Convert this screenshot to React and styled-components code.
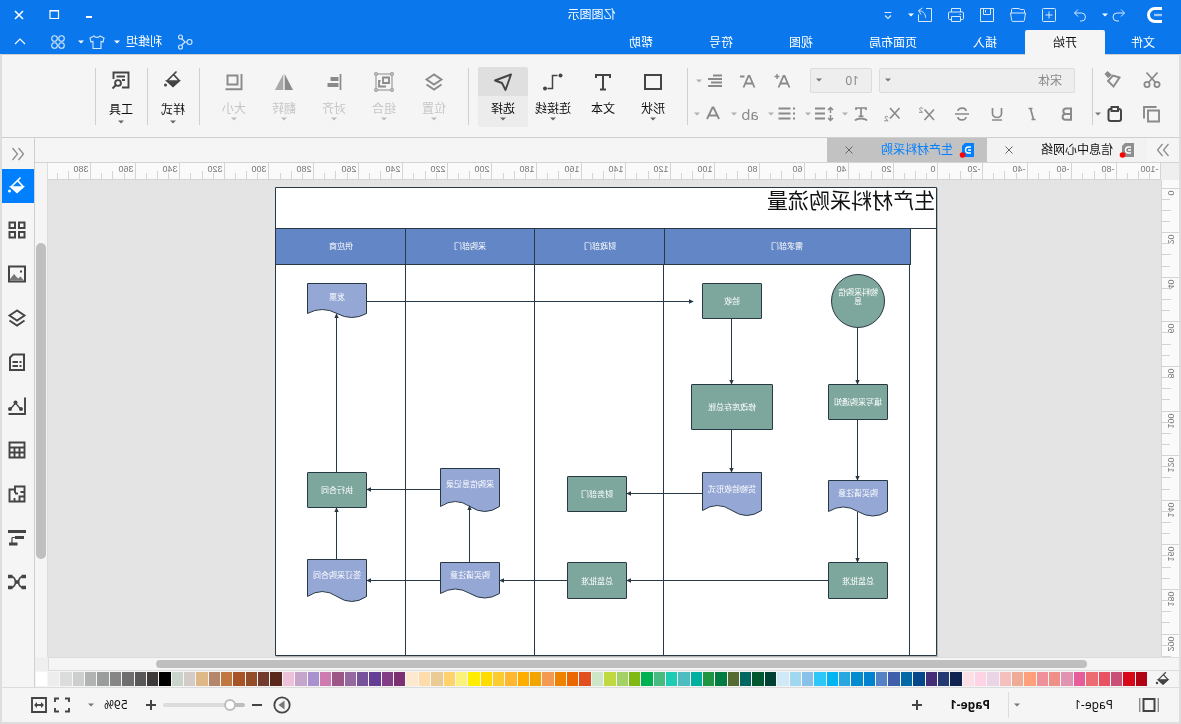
import { useState } from "react";
import styled, { createGlobalStyle, css } from "styled-components";

const FONT = `"Noto Sans", "Noto Sans CJK SC", sans-serif`;

// 文件标签
const MENUS = ["文件", "开始", "插入", "页面布局", "视图", "符号", "帮助"];

// 调色板颜色
const COLORS = (
  "b20315 d9071a c94f76 e85262 eb6d71 e75d9b e194b2 ee9088 f0909b ffa07a " +
  "f0ab96 f5bfbb ead5e6 fed3e4 fde0e6 0e2350 233a72 442d79 04478b 0069a5 " +
  "3f5fab 5482c5 0082cf 008cce 29a7e1 00b5f2 2fc6f9 8ac1ea 9fd8f0 cfeaf6 " +
  "004134 005830 006760 556b2f 007b42 1f9442 00afa0 4fbcbf 1dccb2 48bc80 " +
  "00b152 80b911 a3d165 c0d941 cde6c7 e04f1d eb6700 ef8200 f49951 f2a500 " +
  "ffae00 feb72f fccb32 ffdb00 ffee00 fbf27c ffd26c ebcb94 ffdcaa fde8d0 " +
  "7c2f71 843c84 653d94 75529a 9668a0 9c5687 ce7bb1 a991cf c6a5cb ecc2db " +
  "5a281a 733a2e 934d28 a95426 c07840 b4866b deb887 d4cbc6 c9d4cb 000000 " +
  "3e3a39 595757 6f6f6f 868686 9b9d9c b0b3b2 cdcfce dcdcdc ededed ffffff"
).split(" ");

// 泳道标题
const LANES = [
  { x: 26.5, w: 246, cx: 150, text: "需求部门" },
  { x: 272.5, w: 130, cx: 337, text: "财政部门" },
  { x: 402.5, w: 129, cx: 467, text: "采购部门" },
  { x: 531.5, w: 130, cx: 596, text: "供应商" },
];

// 流程节点
const BOXES = [
  { x: 49.5, y: 197.5, w: 59, h: 35, text: "填写采购通知" },
  { x: 49.5, y: 375.5, w: 59, h: 36, text: "总监批准" },
  { x: 175.5, y: 96.5, w: 59, h: 35, text: "验收" },
  { x: 164.5, y: 197.5, w: 81, h: 45, text: "修改库存总账" },
  { x: 310.5, y: 289.5, w: 59, h: 35, text: "财务部门" },
  { x: 310.5, y: 375.5, w: 59, h: 36, text: "总监批准" },
  { x: 570.5, y: 285.5, w: 59, h: 35, text: "执行合同" },
];

const DOCS = [
  { x: 49.5, y: 293.5, h: 31, a: 9, ty: 306, text: "购买请注意" },
  { x: 175.5, y: 285.5, h: 38, a: 10, ty: 302, text: "货物验收形式" },
  { x: 437.5, y: 281.5, h: 38, a: 10, ty: 297, text: "采购信息记录" },
  { x: 437.5, y: 375.5, h: 31, a: 9, ty: 388, text: "购买请注意" },
  { x: 570.5, y: 372.5, h: 37, a: 10, ty: 388, text: "签订采购合同" },
  { x: 570.5, y: 96.5, h: 30, a: 8, ty: 110, text: "发票" },
];

const LINKS = [
  "M79.5 141V197",
  "M79.5 233V293",
  "M79.5 325V375",
  "M205.5 132V197",
  "M205.5 243V285",
  "M235 306.5H310",
  "M109 393.5H310",
  "M370 393.5H437",
  "M497 393.5H570",
  "M467.5 375V319",
  "M497 302.5H570",
  "M600.5 372V321",
  "M600.5 285V127",
  "M570 114.5H244",
];

// 图标
const Icon = ({ size = 20, w = 1.5, children }) => (
  <Svg
    width={size}
    height={size}
    viewBox="0 0 20 20"
    fill="none"
    stroke="currentColor"
    strokeWidth={w}
    aria-hidden="true"
  >
    {children}
  </Svg>
);

const Caret = () => (
  <Svg width="6" height="4" viewBox="0 0 6 4" aria-hidden="true">
    <path d="M0 0.5H6L3 3.5Z" fill="currentColor" />
  </Svg>
);

const icons = {
  undo: (
    <Icon w={1}>
      <path d="M8 4.5 4.5 8 8 11.5M4.5 8H12a3.7 3.7 0 0 1 0 8H10" />
    </Icon>
  ),
  redo: (
    <Icon w={1}>
      <path d="M12 4.5 15.5 8 12 11.5M15.5 8H8.5a3.7 3.7 0 0 0 0 8H10" />
    </Icon>
  ),
  add: (
    <Icon w={1}>
      <rect x="3.5" y="3.5" width="13" height="13" rx="1" />
      <path d="M10 6.5v7M6.5 10h7" />
    </Icon>
  ),
  open: (
    <Icon w={1}>
      <path d="M3.5 8V5.500a1 1 0 0 1 1-1h3l1.500-1h6.500a1 1 0 0 1 1 1V8M2.500 8h15l-1.200 7.500a1 1 0 0 1-1 .9H4.700a1 1 0 0 1-1-.9Z" />
    </Icon>
  ),
  save: (
    <Icon w={1}>
      <path d="M3.5 3.5h13v13h-13ZM6.5 3.5v6h7v-6M11.5 5v2.5" />
    </Icon>
  ),
  print: (
    <Icon w={1}>
      <path d="M5.5 7V3.5h9V7M5.5 14.5h-2a1 1 0 0 1-1-1V8a1 1 0 0 1 1-1h13a1 1 0 0 1 1 1v5.5a1 1 0 0 1-1 1h-2M5.5 11.5h9v5h-9ZM5 9.5h1.5" />
    </Icon>
  ),
  exportTo: (
    <Icon w={1}>
      <path d="M9 3.5H3.5v13h13V9.5M12.5 3 16.5 5.5 14 9.5M16 5.8c-4 .2-6.5 2.5-6.5 7" />
    </Icon>
  ),
  more: (
    <Icon w={1.2}>
      <path d="M6.5 7.5h7M7 10.5l3 3 3-3" />
    </Icon>
  ),
  share: (
    <Icon w={1.1}>
      <circle cx="5.5" cy="10" r="2.5" />
      <circle cx="14.5" cy="5" r="2" />
      <circle cx="14.5" cy="15" r="2" />
      <path d="M8 10h2l3.5-3.5M10 10l3.5 3.5" />
    </Icon>
  ),
  shirt: (
    <Icon w={1.1}>
      <path d="M7 4 3 6 4 10l2-.5V16.5h8V9.5l2 .5 1-4-4-2c-1 1.8-5 1.8-6 0Z" />
    </Icon>
  ),
  apps: (
    <Icon w={1.1}>
      <circle cx="6.5" cy="6.5" r="2.8" />
      <circle cx="13.5" cy="6.5" r="2.8" />
      <circle cx="6.5" cy="13.5" r="2.8" />
      <circle cx="13.5" cy="13.5" r="2.8" />
    </Icon>
  ),
  chevronUp: (
    <Icon w={1.1}>
      <path d="M5 12 10 7l5 5" />
    </Icon>
  ),
  cut: (
    <Icon w={1.8}>
      <circle cx="5" cy="14.5" r="2.6" />
      <circle cx="15" cy="14.5" r="2.6" />
      <path d="M4.5 2.5 13.5 12.5M15.5 2.5 6.5 12.5" />
    </Icon>
  ),
  brush: (
    <Icon w={1.9}>
      <path d="M4.5 7.5 11 5.500 16 11 10.500 16.500Z" />
      <path d="m12 5 4.500-4 3 3-3.500 4Z" fill="currentColor" stroke="none" />
    </Icon>
  ),
  copy: (
    <Icon w={1.9}>
      <path d="M3 6.500h11v11H3ZM5.500 3h12.500v11.500" />
    </Icon>
  ),
  paste: (
    <Icon w={2}>
      <rect x="3" y="5" width="12.5" height="12" rx="2" />
      <rect x="6" y="3" width="6.5" height="4" fill="#f5f5f5" />
    </Icon>
  ),
  fontUp: (
    <Icon w={1.8}>
      <path d="M3.5 16.5 8.500 5h1l5 11.500M5.500 12.500h7" />
      <path d="M13.500 5.500h5M16 3v5" strokeWidth="1.4" />
    </Icon>
  ),
  fontDown: (
    <Icon w={1.8}>
      <path d="M3.500 16.500 8.500 5h1l5 11.500M5.500 12.500h7M13.500 5.500h4.500" />
    </Icon>
  ),
  fontColor: (
    <Icon w={1.9}>
      <path d="M4 15 9.500 3.500h1L16 15M6 11.500h8" />
    </Icon>
  ),
  align: (
    <Icon w={1.8}>
      <path d="M3 4.500h9M3 8h14M3 11.500h11M3 15h14" />
    </Icon>
  ),
  bold: (
    <Icon w={2}>
      <path d="M6 4.500h5a2.700 2.700 0 0 1 0 5.400H6ZM6 9.900h5.500a2.900 2.900 0 0 1 0 5.800H6Z" />
    </Icon>
  ),
  italic: (
    <Icon w={1.7}>
      <path d="M6.500 4.500h4M9.500 15.500h4M8.500 4.500l3 11" transform="matrix(-1 0 0 1 20 0)" />
    </Icon>
  ),
  underline: (
    <Icon w={1.7}>
      <path d="M5.500 4v5.500a4.500 4 0 0 0 9 0V4M5 16h10" />
    </Icon>
  ),
  strike: (
    <Icon w={1.7}>
      <path d="M14 7c-.5-4-8-3.800-8 0M6 13c.5 4 8 3.800 8 0M3 10h14" />
    </Icon>
  ),
  sup: (
    <Icon w={1.7}>
      <path d="m3 5.500 9.500 10.500M12.500 5.500 3 16" />
      <path d="M14.500 5c.3-2 3.500-1.500 2.800.3L14.500 8.300H18" strokeWidth="1" />
    </Icon>
  ),
  sub: (
    <Icon w={1.7}>
      <path d="m2.500 4 9.500 10.500M12 4 2.500 14.500" />
      <path d="M14 13.500c.3-2 3.500-1.500 2.800.3L14 16.800h3.800" strokeWidth="1" />
    </Icon>
  ),
  textCurve: (
    <Icon w={1.7}>
      <path d="M5 6V4h10v2M10 4v8.500M7.500 12.300h5M4 16.500c2-2.500 10-2.500 12 0" />
    </Icon>
  ),
  spacing: (
    <Icon w={1.8}>
      <path d="M9 4.500h10M9 9.500h10M9 14.500h10" />
      <path d="M3.500 4v5M3.500 11v5M1 6l2.500-2.500L6 6M1 14l2.500 2.500L6 14" strokeWidth="1.5" />
    </Icon>
  ),
  list: (
    <Icon w={1.8}>
      <path d="M6.500 4.500h12M6.500 9.500h12M6.500 14.500h12M2 4.500h2M2 9.500h2M2 14.500h2" />
    </Icon>
  ),
  shape: (
    <Icon w={2}>
      <rect x="2" y="3" width="16" height="14" />
    </Icon>
  ),
  text: (
    <Icon w={2}>
      <path d="M3 6V3h14v3M10 3v14.500M7 17.500h6" />
    </Icon>
  ),
  connector: (
    <Icon w={1.5}>
      <path d="M5.500 3.500h5v13h5" />
      <circle cx="2.500" cy="3.500" r="2" fill="currentColor" stroke="none" />
      <circle cx="18" cy="16.500" r="2" fill="currentColor" stroke="none" />
    </Icon>
  ),
  cursor: (
    <Icon w={1.9}>
      <path d="M2 2.500 18 8.500l-7 2.500-3.500 7Z" strokeLinejoin="round" />
    </Icon>
  ),
  layer: (
    <Icon w={1.9}>
      <path d="m10 2.500 7.500 5L10 12.500 2.500 7.500ZM2.500 12.500l7.500 5 7.500-5" />
    </Icon>
  ),
  group: (
    <Icon w={1}>
      <path d="M2 2h16v16H2Z" />
      <path
        d="M.8.800h2.400v2.400H.8ZM16.800.800h2.400v2.400h-2.400ZM.8 16.800h2.400v2.400H.8ZM16.800 16.800h2.400v2.400h-2.400Z"
        fill="#f5f5f5"
      />
      <path d="M5 5.500h6v5.500H5ZM13.500 9h1.500v5.500H9v-1" strokeWidth="1.800" />
    </Icon>
  ),
  alignObj: (
    <Icon w={1.7}>
      <path d="M3.500 2v16" />
      <path d="M5.500 7h8M5.500 13h11" strokeWidth="4" />
    </Icon>
  ),
  flip: (
    <Icon w={0}>
      <path d="M9.300 2v16H1Z" fill="#8a8a8a" />
      <path d="M10.700 2v16H19Z" fill="#a8a8a8" />
    </Icon>
  ),
  sizeObj: (
    <Icon w={1.9}>
      <path d="M6.500 3.500h10v9h-10ZM2.500 2v15.200h16" />
    </Icon>
  ),
  fill: (
    <Icon w={1.6}>
      <path d="M9.500 4.500 15.500 10.500 10 16 4 10.500ZM6.500 1.500l4 4" />
      <path d="M4 11h12L10 16.500Z" fill="currentColor" />
      <circle cx="17.500" cy="15" r="1.500" fill="currentColor" stroke="none" />
    </Icon>
  ),
  tools: (
    <Icon w={1.9}>
      <path d="M17.500 9V2.500h-15V17.500h6.500M6 6.500h8.500M6 10h3" />
      <circle cx="13" cy="13" r="2.900" />
      <path d="m15 15 3.500 3.500" />
    </Icon>
  ),
  grid: (
    <Icon w={2}>
      <path d="M2.500 2.500h5.500v5.500H2.500ZM12 2.500h5.500v5.500H12ZM2.500 12h5.500v5.500H2.500ZM12 12h5.500v5.500H12Z" />
    </Icon>
  ),
  image: (
    <Icon w={2}>
      <path d="M2 2.500h16v15H2Z" />
      <path d="M3 16.500 6.500 12.500l2.500 2 4-4.500 4 5v1.500Z" fill="#777" stroke="none" />
      <path d="M5 7.500h2" />
    </Icon>
  ),
  note: (
    <Icon w={2}>
      <path d="M3 2.500h11l3 3v12.500H3ZM5.500 10h2M9 10h5.500M5.500 14h2M9 14h5.500" />
    </Icon>
  ),
  chart: (
    <Icon w={1.9}>
      <path d="M2 1.500V18h16.500" />
      <path d="M6 13.500 11.500 7l5.500 6.500" strokeWidth="1.300" />
      <circle cx="6" cy="13" r="2" fill="currentColor" stroke="none" />
      <circle cx="11.500" cy="6.500" r="2" fill="currentColor" stroke="none" />
      <circle cx="17" cy="13" r="2" fill="currentColor" stroke="none" />
    </Icon>
  ),
  table: (
    <Icon w={1.9}>
      <path d="M2.500 2.500h15v15h-15ZM2.500 7.500h15M2.500 12.500h15M7.500 7.500v10M12.500 7.500v10" />
    </Icon>
  ),
  plan: (
    <Icon w={1.9}>
      <path d="M2.500 2.500h9.500V5.500h5.500v12h-15ZM2.500 8h4M2.500 12.500h5v5M12 5.500v3.500M9 9.500h3M12.500 14v3.500" />
    </Icon>
  ),
  gantt: (
    <Icon w={1.2}>
      <path d="M15 9.500v6M12 9.500h3" />
      <path d="M1 3.500h18M3 9.500h9M9.500 16h8.500" strokeWidth="3" />
    </Icon>
  ),
  mind: (
    <Icon w={1.5}>
      <path d="M4 4.500c5 0 3.500 5.500 6 5.500s1-5.500 6-5.500M4 15.500c5 0 3.500-5.500 6-5.500s1 5.500 6 5.500" />
      <path d="M1 4.500h4.500M14.500 4.500H19M1 15.500h4.500M14.500 15.500H19M7.500 10h5" strokeWidth="3.600" />
    </Icon>
  ),
  pages: (
    <Icon w={2}>
      <path d="M4.500 4h11v12h-11Z" />
      <path d="M.7 3v14M19.300 3v14" strokeWidth="1.400" stroke="#8a8a8a" />
    </Icon>
  ),
  plus: (
    <Icon w={2}>
      <path d="M10 5v10M5 10h10" />
    </Icon>
  ),
  minus: (
    <Icon w={2}>
      <path d="M5 10h10" />
    </Icon>
  ),
  play: (
    <Icon w={1.8}>
      <circle cx="10" cy="10" r="7.700" />
      <path d="M7.500 5.500v9l6-4.500Z" fill="#777" stroke="none" />
    </Icon>
  ),
  full: (
    <Icon w={1.9}>
      <path d="M3 7V3.500h4M13 3.500h4V7M17 13v3.500h-4M7 16.500H3V13" />
    </Icon>
  ),
  fit: (
    <Icon w={1.9}>
      <path d="M3 3h14v14H3Z" />
      <path d="M6 10h8" />
      <path d="M8 7v6L5 10ZM12 7v6l3-3Z" fill="currentColor" stroke="none" />
    </Icon>
  ),
  close: (
    <Icon w={1.5}>
      <path d="m6 6 8 8M14 6l-8 8" />
    </Icon>
  ),
  closeTab: (
    <Icon w={1}>
      <path d="m6.500 6.500 7 7M13.500 6.500l-7 7" />
    </Icon>
  ),
  maximize: (
    <Icon w={1.2}>
      <path d="M5.500 5.500h8.500v8h-8.500ZM5.500 6h8.500" />
    </Icon>
  ),
  minimize: (
    <Icon w={2}>
      <path d="M7 12h6" />
    </Icon>
  ),
  doubleRight: (
    <Icon w={1.2}>
      <path d="m4.500 4 5 6-5 6M10.500 4l5 6-5 6" />
    </Icon>
  ),
  doubleLeft: (
    <Icon w={1.2}>
      <path d="m9.500 4-5 6 5 6M15.500 4l-5 6 5 6" />
    </Icon>
  ),
};

const Logo = () => (
  <Svg width="16" height="18" viewBox="0 0 16 18" fill="none" aria-hidden="true">
    <path d="M1 2.500h7a6.500 6.500 0 0 1 0 13H1" stroke="#fff" strokeWidth="3" />
    <path d="M1 9h8" stroke="#9cc9f7" strokeWidth="2.400" />
  </Svg>
);

const FileIcon = ({ color }) => (
  <Svg width="16" height="16" viewBox="0 0 16 16" fill="none" aria-hidden="true">
    <path d="M1 1h9l3 3v11H1Z" fill={color} />
    <path d="M4 5h2.500a3 3 0 0 1 0 6H4M4 8h3" stroke="#fff" strokeWidth="1.300" />
    <circle cx="12.500" cy="13" r="2.800" fill="#f00" />
  </Svg>
);

const TICKS = Array.from({ length: 100 }, (_, i) => i);

// 横向标尺
const TopRuler = () => (
  <RulerSvg aria-hidden="true">
    {TICKS.map((i) => {
      const x = Math.floor((i * 446) / 40) + 0.5;
      const top = i % 4 === 0 ? 0 : i % 2 === 0 ? 8 : 10;
      return (
        <g key={i}>
          <path d={`M${x} ${top}V16`} stroke="#d4d4d4" />
          {i % 4 === 0 && (
            <text x={x + 2} y="9">
              {i * 5 - 100}
            </text>
          )}
        </g>
      );
    })}
  </RulerSvg>
);

// 纵向标尺
const SideRuler = () => (
  <RulerSvg aria-hidden="true">
    {TICKS.slice(0, 44).map((i) => {
      const y = Math.floor((i * 446) / 40) + 8.5;
      return (
        <g key={i}>
          <path d={`M${i % 4 === 0 ? 0 : i % 2 === 0 ? 8 : 9} ${y}H17`} stroke="#d4d4d4" />
          {i % 4 === 0 && (
            <text textAnchor="end" transform={`translate(11 ${y + 2}) rotate(-90)`}>
              {i * 5}
            </text>
          )}
        </g>
      );
    })}
  </RulerSvg>
);

// 文档形状：底边为波浪线
const docPath = ({ x, y, h, a }) =>
  `M${x} ${y}h59v${h}q-14.750 ${-a} -29.500 0t-29.500 0Z`;

const Diagram = () => (
  <DiagramSvg width="662" height="469" viewBox="0 0 662 469" role="img" aria-label="流程图">
    <defs>
      <marker
        id="arrow"
        viewBox="0 0 6 6"
        refX="5"
        refY="3"
        markerWidth="5"
        markerHeight="5"
        orient="auto"
      >
        <path d="M0 0.300 6 3 0 5.700Z" fill="#283845" />
      </marker>
    </defs>
    <g fill="none" stroke="#283845">
      <path d="M.5 .5h661v468H.5ZM0 41.5H662M27.5 77V469M273.5 77V469M402.5 77V469M531.5 77V469" />
      {LANES.map((l) => (
        <rect key={l.text} x={l.x} y="41.5" width={l.w} height="36" fill="#6387c6" />
      ))}
      {BOXES.map((b) => (
        <rect
          key={`${b.x}-${b.y}`}
          x={b.x}
          y={b.y}
          width={b.w}
          height={b.h}
          rx="0.5"
          fill="#7da79d"
        />
      ))}
      <circle cx="79" cy="114" r="26.5" fill="#7da79d" />
      {DOCS.map((d) => (
        <path key={`${d.x}-${d.y}`} d={docPath(d)} fill="#95a7d5" />
      ))}
      {LINKS.map((d) => (
        <path key={d} d={d} markerEnd="url(#arrow)" />
      ))}
    </g>
    <text className="title" x="2" y="21">
      生产材料采购流量
    </text>
    <g className="label">
      {LANES.map((l) => (
        <text key={l.text} x={l.cx} y="62">
          {l.text}
        </text>
      ))}
      {BOXES.map((b) => (
        <text key={`${b.x}-${b.y}`} x={b.x + b.w / 2} y={b.y + b.h / 2 + 3}>
          {b.text}
        </text>
      ))}
      {DOCS.map((d) => (
        <text key={`${d.x}-${d.y}`} x={d.x + 29.5} y={d.ty + 3}>
          {d.text}
        </text>
      ))}
      <text>
        <tspan x="79" y="108">物料采购信</tspan>
        <tspan x="79" y="117">息</tspan>
      </text>
    </g>
  </DiagramSvg>
);

const Tool = ({ icon, label, active, disabled, plain, loose }) => (
  <ToolButton type="button" disabled={disabled} $active={active}>
    <ToolIcon $active={active} $loose={loose}>{icons[icon]}</ToolIcon>
    <ToolLabel $loose={loose}>{label}</ToolLabel>
    {!plain && <Caret />}
  </ToolButton>
);

const SIDE = ["fill", "grid", "image", "layer", "note", "chart", "table", "plan", "gantt", "mind"];

function App() {
  const [menu, setMenu] = useState("开始");
  const [panel, setPanel] = useState("fill");
  const [zoom, setZoom] = useState(13);

  return (
    <>
      <GlobalStyle />
      <Frame>
        <Header>
          {/* 标题栏 */}
          <TitleRow>
            <QuickTools>
              <LogoBox>
                <Logo />
              </LogoBox>
              <QuickButton type="button" aria-label="撤销">{icons.undo}</QuickButton>
              <QuickCaret type="button" aria-label="撤销记录" $space={5}><Caret /></QuickCaret>
              <QuickButton type="button" aria-label="重做">{icons.redo}</QuickButton>
              <QuickButton type="button" aria-label="新建">{icons.add}</QuickButton>
              <QuickButton type="button" aria-label="打开">{icons.open}</QuickButton>
              <QuickButton type="button" aria-label="保存">{icons.save}</QuickButton>
              <QuickButton type="button" aria-label="打印">{icons.print}</QuickButton>
              <QuickButton type="button" aria-label="导出">{icons.exportTo}</QuickButton>
              <QuickCaret type="button" aria-label="导出选项" $space={3}><Caret /></QuickCaret>
              <QuickButton type="button" aria-label="更多">{icons.more}</QuickButton>
            </QuickTools>
            <AppTitle>亿图图示</AppTitle>
            <WindowControls>
              <WindowButton type="button" aria-label="最小化">{icons.minimize}</WindowButton>
              <WindowButton type="button" aria-label="最大化">{icons.maximize}</WindowButton>
              <WindowButton type="button" aria-label="关闭">{icons.close}</WindowButton>
            </WindowControls>
          </TitleRow>

          {/* 菜单栏 */}
          <MenuRow>
            <MenuTabs>
              {MENUS.map((m) => (
                <MenuTab key={m} type="button" $active={m === menu} onClick={() => setMenu(m)}>
                  {m}
                </MenuTab>
              ))}
            </MenuTabs>
            <Account>
              <AccountButton type="button" aria-label="分享" $space={11}>{icons.share}</AccountButton>
              <UserName type="button">利维坦</UserName>
              <SmallCaret type="button" aria-label="账户菜单" $space={4}><Caret /></SmallCaret>
              <AccountButton type="button" aria-label="主题">{icons.shirt}</AccountButton>
              <SmallCaret type="button" aria-label="主题菜单" $space={7}><Caret /></SmallCaret>
              <AccountButton type="button" aria-label="应用" $space={8}>{icons.apps}</AccountButton>
              <WindowButton type="button" aria-label="收起功能区">{icons.chevronUp}</WindowButton>
            </Account>
          </MenuRow>
        </Header>

        <Main>
          {/* 功能区 */}
          <Ribbon>
            <Clipboard>
              <IconButton type="button" aria-label="剪切">{icons.cut}</IconButton>
              <IconButton type="button" aria-label="格式刷">{icons.brush}</IconButton>
              <IconButton type="button" aria-label="复制">{icons.copy}</IconButton>
              <SplitButton>
                <IconButton type="button" aria-label="粘贴" $dark>{icons.paste}</IconButton>
                <SmallCaret type="button" aria-label="粘贴选项" $dark><Caret /></SmallCaret>
              </SplitButton>
            </Clipboard>
            <Divider />
            <FontGroup>
              <FontRow $left={17}>
                <SelectBox $width={196}>
                  <select aria-label="字体" defaultValue="宋体">
                    <option>宋体</option>
                  </select>
                  <Caret />
                </SelectBox>
                <SelectBox $width={62}>
                  <select aria-label="字号" defaultValue="10">
                    <option>10</option>
                  </select>
                  <Caret />
                </SelectBox>
                <FontSizeButtons>
                  <FormatButton type="button" aria-label="增大字号">{icons.fontUp}</FormatButton>
                  <FormatButton type="button" aria-label="减小字号">{icons.fontDown}</FormatButton>
                </FontSizeButtons>
                <SplitButton>
                  <IconButton type="button" aria-label="对齐方式">{icons.align}</IconButton>
                  <SmallCaret type="button" aria-label="对齐选项"><Caret /></SmallCaret>
                </SplitButton>
              </FontRow>
              <FontRow $left={7}>
                <FormatButtons>
                  {["bold", "italic", "underline", "strike", "sup", "sub"].map((k) => (
                    <FormatButton key={k} type="button" aria-label={k}>
                      {icons[k]}
                    </FormatButton>
                  ))}
                </FormatButtons>
                {["textCurve", "spacing", "list", "ab", "fontColor"].map((k) => (
                  <SplitButton key={k}>
                    <IconButton type="button" aria-label={k}>
                      {k === "ab" ? "ab" : icons[k]}
                    </IconButton>
                    <SmallCaret type="button" aria-label={`${k} 选项`}><Caret /></SmallCaret>
                  </SplitButton>
                ))}
              </FontRow>
            </FontGroup>
            <Divider />
            <ToolGroup>
              <Tool icon="shape" label="形状" />
              <Tool icon="text" label="文本" plain />
              <Tool icon="connector" label="连接线" />
              <Tool icon="cursor" label="选择" active />
            </ToolGroup>
            <Divider />
            <ToolGroup>
              <Tool icon="layer" label="位置" disabled />
              <Tool icon="group" label="组合" disabled />
              <Tool icon="alignObj" label="对齐" disabled />
              <Tool icon="flip" label="翻转" disabled />
              <Tool icon="sizeObj" label="大小" disabled />
            </ToolGroup>
            <Divider />
            <ToolGroup $tight>
              <Tool icon="fill" label="样式" loose />
            </ToolGroup>
            <Divider />
            <ToolGroup $tight>
              <Tool icon="tools" label="工具" loose />
            </ToolGroup>
            <Divider />
          </Ribbon>

          <Body>
            <Editor>
              {/* 文档标签 */}
              <DocTabs>
                <Expand type="button" aria-label="展开">{icons.doubleRight}</Expand>
                <DocTab>
                  <FileIcon color="#8f8f8f" />
                  <button type="button">信息中心网络</button>
                  <CloseTab type="button" aria-label="关闭标签">{icons.closeTab}</CloseTab>
                </DocTab>
                <DocTab $active>
                  <FileIcon color="#0080ff" />
                  <button type="button">生产材料采购</button>
                  <CloseTab type="button" aria-label="关闭标签">{icons.closeTab}</CloseTab>
                </DocTab>
              </DocTabs>

              {/* 画布区域 */}
              <Workspace>
                <Corner />
                <RulerTop>
                  <TopRuler />
                </RulerTop>
                <RulerSide>
                  <SideRuler />
                </RulerSide>
                <Canvas>
                  <Page>
                    <Diagram />
                  </Page>
                </Canvas>
                <ScrollY>
                  <Thumb />
                </ScrollY>
                <ScrollX>
                  <Thumb />
                </ScrollX>
                <Corner />
              </Workspace>

              {/* 调色板 */}
              <Palette>
                <PaletteIcon type="button" aria-label="填充颜色">{icons.fill}</PaletteIcon>
                {COLORS.map((c) => (
                  <Swatch key={c} type="button" aria-label={`#${c}`} $color={`#${c}`} />
                ))}
              </Palette>
            </Editor>

            {/* 侧边栏 */}
            <Sidebar>
              <Collapse type="button" aria-label="收起">{icons.doubleLeft}</Collapse>
              {SIDE.map((s) => (
                <SideButton
                  key={s}
                  type="button"
                  aria-label={s}
                  $active={s === panel}
                  onClick={() => setPanel(s)}
                >
                  {icons[s]}
                </SideButton>
              ))}
            </Sidebar>
          </Body>

          {/* 状态栏 */}
          <StatusBar>
            <StatusGroup>
              <PagesButton type="button" aria-label="页面列表">{icons.pages}</PagesButton>
              <PageSelect>
                <select aria-label="页面" defaultValue="Page-1">
                  <option>Page-1</option>
                </select>
                <Caret />
              </PageSelect>
              <StatusDivider />
              <CurrentPage type="button">Page-1</CurrentPage>
              <StatusButton type="button" aria-label="新增页面">{icons.plus}</StatusButton>
            </StatusGroup>
            <StatusGroup>
              <StatusButton type="button" aria-label="播放" $space={5}>{icons.play}</StatusButton>
              <StatusButton type="button" aria-label="缩小" $space={2}>{icons.minus}</StatusButton>
              <ZoomSlider
                type="range"
                aria-label="缩放"
                min="0"
                max="100"
                value={zoom}
                onChange={(e) => setZoom(Number(e.target.value))}
              />
              <StatusButton type="button" aria-label="放大" $space={13}>{icons.plus}</StatusButton>
              <ZoomValue>59%</ZoomValue>
              <SmallCaret type="button" aria-label="缩放选项" $space={15} $dark><Caret /></SmallCaret>
              <StatusButton type="button" aria-label="全屏" $space={3}>{icons.full}</StatusButton>
              <StatusButton type="button" aria-label="适应宽度" $space={27}>{icons.fit}</StatusButton>
            </StatusGroup>
          </StatusBar>
        </Main>
      </Frame>
    </>
  );
}

const GlobalStyle = createGlobalStyle`
  * {
    box-sizing: border-box;
  }

  body {
    margin: 0;
    background: #f5f5f5;
    font-family: ${FONT};
    font-size: 12px;
    line-height: 16px;
    color: #111;
  }

  button {
    padding: 0;
    border: 0;
    background: none;
    font: inherit;
    color: inherit;
    white-space: nowrap;
  }
`;

const center = css`
  display: flex;
  align-items: center;
  justify-content: center;
`;

const Svg = styled.svg`
  display: block;
  flex: none;
`;

// 整个窗口水平镜像
const Frame = styled.div`
  display: flex;
  flex-direction: column;
  min-height: 100vh;
  overflow: hidden;
  transform: scaleX(-1);
`;

const Header = styled.header`
  background: #0a77ec;
  color: #fff;
`;

const TitleRow = styled.div`
  display: flex;
  align-items: center;
  height: 30px;
`;

const QuickTools = styled.div`
  display: flex;
  align-items: center;
  flex: 1;
`;

const LogoBox = styled.div`
  ${center}
  width: 30px;
  margin: 0 5px 0 11px;
`;

const QuickButton = styled.button`
  ${center}
  width: 31px;
  height: 28px;
  color: #d6e8fc;
`;

const SmallCaret = styled.button`
  ${center}
  width: 8px;
  height: 20px;
  margin-right: ${(props) => props.$space || 0}px;
  color: ${(props) => (props.$dark ? "#777" : "inherit")};
`;

const QuickCaret = styled(SmallCaret)`
  margin-left: -5px;
`;

const AppTitle = styled.h1`
  margin: 0;
  font-size: 12px;
  font-weight: 400;
`;

const WindowControls = styled.div`
  display: flex;
  justify-content: flex-end;
  flex: 1;
  padding-right: 2px;
`;

const WindowButton = styled.button`
  ${center}
  width: 35px;
  height: 24px;
`;

const MenuRow = styled.div`
  display: flex;
  justify-content: space-between;
  height: 24px;
`;

const MenuTabs = styled.nav`
  display: flex;
`;

const MenuTab = styled.button`
  height: 25px;
  padding: 0 28px;
  position: relative;
  border-radius: 2px 2px 0 0;
  background: ${(props) => (props.$active ? "#f5f5f5" : "transparent")};
  color: ${(props) => (props.$active ? "#111" : "#fff")};

  &:first-child {
    padding: 0 26px;
  }
`;

const Account = styled.div`
  display: flex;
  align-items: center;
  padding-right: 3px;
`;

const AccountButton = styled.button`
  ${center}
  width: 24px;
  height: 24px;
  margin-right: ${(props) => props.$space || 0}px;
  color: #d6e8fc;
`;

const UserName = styled.button`
  margin-right: 5px;
`;

const Main = styled.main`
  display: flex;
  flex-direction: column;
  flex: 1;
  border: solid #dedede;
  border-width: 0 2px 2px;
`;

const Ribbon = styled.div`
  display: flex;
  height: 84px;
  padding-top: 12px;
  border-top: 1px solid #cfcfcf;
  border-bottom: 1px solid #cfcfcf;
  background: #f5f5f5;
`;

const Divider = styled.span`
  flex: none;
  width: 1px;
  height: 57px;
  margin-top: 1px;
  background: #d0d0d0;
`;

const Clipboard = styled.div`
  display: grid;
  grid-template-columns: 24px 33px;
  column-gap: 14px;
  align-content: start;
  row-gap: 10px;
  padding: 1px 0 0 15px;
`;

const IconButton = styled.button`
  ${center}
  width: 24px;
  height: 24px;
  font-size: 15px;
  color: ${(props) => (props.$dark ? "#444" : "#8a8a8a")};
`;

const SplitButton = styled.div`
  display: flex;
  align-items: center;
  width: 37px;
  color: #b0b0b0;
`;

const FontGroup = styled.div`
  display: flex;
  flex-direction: column;
  gap: 8px;
  width: 404px;
  padding-top: 1px;
`;

const FontRow = styled.div`
  display: flex;
  align-items: center;
  height: 25px;
  padding-left: ${(props) => props.$left}px;
`;

const SelectBox = styled.div`
  position: relative;
  width: ${(props) => props.$width}px;
  margin-right: 7px;
  color: #777;

  select {
    width: 100%;
    height: 25px;
    padding: 0 12px;
    appearance: none;
    border: 1px solid #dcdcdc;
    border-radius: 2px;
    background: #eee;
    font: inherit;
    color: #888;
  }

  svg {
    position: absolute;
    right: 6px;
    top: 10px;
    pointer-events: none;
  }
`;

const FontSizeButtons = styled.div`
  display: flex;
  margin: 0 4px 0 2px;
`;

const FormatButtons = styled.div`
  display: flex;
  margin-right: 2px;
`;

const FormatButton = styled.button`
  ${center}
  width: 35px;
  height: 24px;
  color: #8a8a8a;
`;

const ToolGroup = styled.div`
  display: flex;
  padding: ${(props) => (props.$tight ? "0 0 0 1px" : "0 9px")};
`;

const ToolButton = styled.button`
  display: flex;
  flex-direction: column;
  align-items: center;
  width: 50px;
  height: 60px;
  border-radius: 2px;
  overflow: hidden;
  background: ${(props) => (props.$active ? "#ececec" : "transparent")};
  color: ${(props) => (props.disabled ? "#c6c6c6" : "#111")};

  > svg {
    flex: none;
    color: ${(props) => (props.disabled ? "#bbb" : "#666")};
  }
`;

const ToolIcon = styled.span`
  ${center}
  flex: none;
  width: 100%;
  height: 29px;
  padding-bottom: ${(props) => (props.$loose ? 4 : 0)}px;
  background: ${(props) => (props.$active ? "#dfdfdf" : "transparent")};
  color: #444;

  button:disabled & {
    color: #8a8a8a;
  }
`;

const ToolLabel = styled.span`
  margin: ${(props) => (props.$loose ? "6px 0 2px" : "5px 0 0")};
`;

const Body = styled.div`
  display: flex;
  flex: 1;
`;

const Editor = styled.section`
  display: flex;
  flex-direction: column;
  flex: 1;
  min-width: 0;
`;

const DocTabs = styled.div`
  display: flex;
  height: 25px;
  border-bottom: 1px solid #d4d4d4;
  background: #f5f5f5;
`;

const Expand = styled.button`
  ${center}
  width: 32px;
  color: #888;
`;

const DocTab = styled.div`
  display: flex;
  align-items: center;
  width: 160px;
  padding: 0 12px 0 12px;
  gap: 6px;
  background: ${(props) => (props.$active ? "#c2c2c2" : "#f2f2f2")};
  color: ${(props) => (props.$active ? "#0080ff" : "#111")};
`;

const CloseTab = styled.button`
  ${center}
  width: 20px;
  height: 20px;
  margin-left: auto;
  color: #666;
`;

const Workspace = styled.div`
  display: grid;
  grid-template-columns: 18px 1fr 13px;
  grid-template-rows: 17px 1fr 14px;
  flex: 1;
`;

const Corner = styled.div`
  background: #efefef;
`;

const RulerSvg = styled.svg`
  display: block;
  position: absolute;
  width: 100%;
  height: 100%;
  font-family: "Liberation Sans", sans-serif;
  font-size: 9px;
  fill: #777;
`;

const RulerTop = styled.div`
  position: relative;
  overflow: hidden;
  border-bottom: 1px solid #d4d4d4;
  background: #fafafa;
`;

const RulerSide = styled.div`
  grid-column: 1;
  grid-row: 2;
  position: relative;
  overflow: hidden;
  border-right: 1px solid #d4d4d4;
  background: #fafafa;
`;

const Canvas = styled.div`
  grid-column: 2;
  grid-row: 2;
  position: relative;
  overflow: hidden;
  background: #e4e4e4;
`;

// 画布上的页面
const Page = styled.div`
  position: absolute;
  left: 224px;
  top: 7px;
  background: #fff;
  box-shadow: -1px 1px 0 #b4b4b4;
`;

const DiagramSvg = styled.svg`
  display: block;
  font-family: ${FONT};

  .title {
    font-size: 21px;
    fill: #111;
  }

  .label {
    font-size: 8px;
    fill: #fff;
    text-anchor: middle;
  }
`;

const Thumb = styled.div`
  flex: 1;
  border-radius: 5px;
  background: #bfbfbf;
`;

const ScrollY = styled.div`
  display: flex;
  grid-column: 3;
  grid-row: 1 / 3;
  padding: 80px 1px 98px;
  border-left: 1px solid #dcdcdc;
  background: #f5f5f5;
`;

const ScrollX = styled.div`
  display: flex;
  grid-column: 1 / 3;
  padding: 2px 107px 2px 92px;
  border: solid #dcdcdc;
  border-width: 1px 1px 1px 0;
  background: #f5f5f5;
`;

const Palette = styled.div`
  display: flex;
  gap: 1px;
  height: 16px;
  padding: 1px 1px 1px 0;
  background: #f5f5f5;
`;

const PaletteIcon = styled.button`
  ${center}
  width: 31px;
  color: #444;

  svg {
    width: 16px;
    height: 16px;
  }
`;

const Swatch = styled.button`
  flex: 1;
  min-width: 0;
  background: ${(props) => props.$color};
`;

const Sidebar = styled.aside`
  display: flex;
  flex-direction: column;
  gap: 10px;
  width: 33px;
  border-left: 1px solid #cfcfcf;
  background: #f5f5f5;
`;

const Collapse = styled.button`
  ${center}
  height: 31px;
  margin-bottom: -10px;
  color: #888;
`;

const SideButton = styled.button`
  ${center}
  height: 34px;
  padding-left: 2px;
  background: ${(props) => (props.$active ? "#0080ff" : "transparent")};
  color: ${(props) => (props.$active ? "#fff" : "#444")};
`;

const StatusBar = styled.footer`
  display: flex;
  justify-content: space-between;
  height: 35px;
  border-top: 1px solid #dcdcdc;
  background: #f5f5f5;
`;

const StatusGroup = styled.div`
  display: flex;
  align-items: center;
`;

const StatusButton = styled.button`
  ${center}
  width: 20px;
  height: 20px;
  margin-right: ${(props) => props.$space || 0}px;
  color: #444;
`;

const PagesButton = styled(StatusButton)`
  width: 24px;
  margin: 0 16px 0 18px;
`;

const PageSelect = styled.div`
  position: relative;
  width: 108px;
  color: #777;

  select {
    width: 100%;
    height: 24px;
    padding: 0 8px;
    appearance: none;
    border: 0;
    background: transparent;
    font: inherit;
    color: #111;
  }

  svg {
    position: absolute;
    right: 1px;
    top: 10px;
    pointer-events: none;
  }
`;

const StatusDivider = styled.span`
  width: 1px;
  height: 26px;
  margin: 0 18px 0 4px;
  background: #dcdcdc;
`;

const CurrentPage = styled.button`
  margin-right: 23px;
  font-weight: 700;
`;

const ZoomSlider = styled.input`
  width: 82px;
  height: 14px;
  margin: 0 2px 0 0;
  appearance: none;
  background: transparent;

  &::-webkit-slider-runnable-track {
    height: 4px;
    border-radius: 2px;
    background: linear-gradient(90deg, #bdbdbd 12px, #dcdcdc 12px);
  }

  &::-webkit-slider-thumb {
    appearance: none;
    width: 12px;
    height: 12px;
    margin-top: -4px;
    border: 2px solid #bdbdbd;
    border-radius: 50%;
    background: #fff;
  }
`;

const ZoomValue = styled.span`
  margin-right: 9px;
`;

export default App;
